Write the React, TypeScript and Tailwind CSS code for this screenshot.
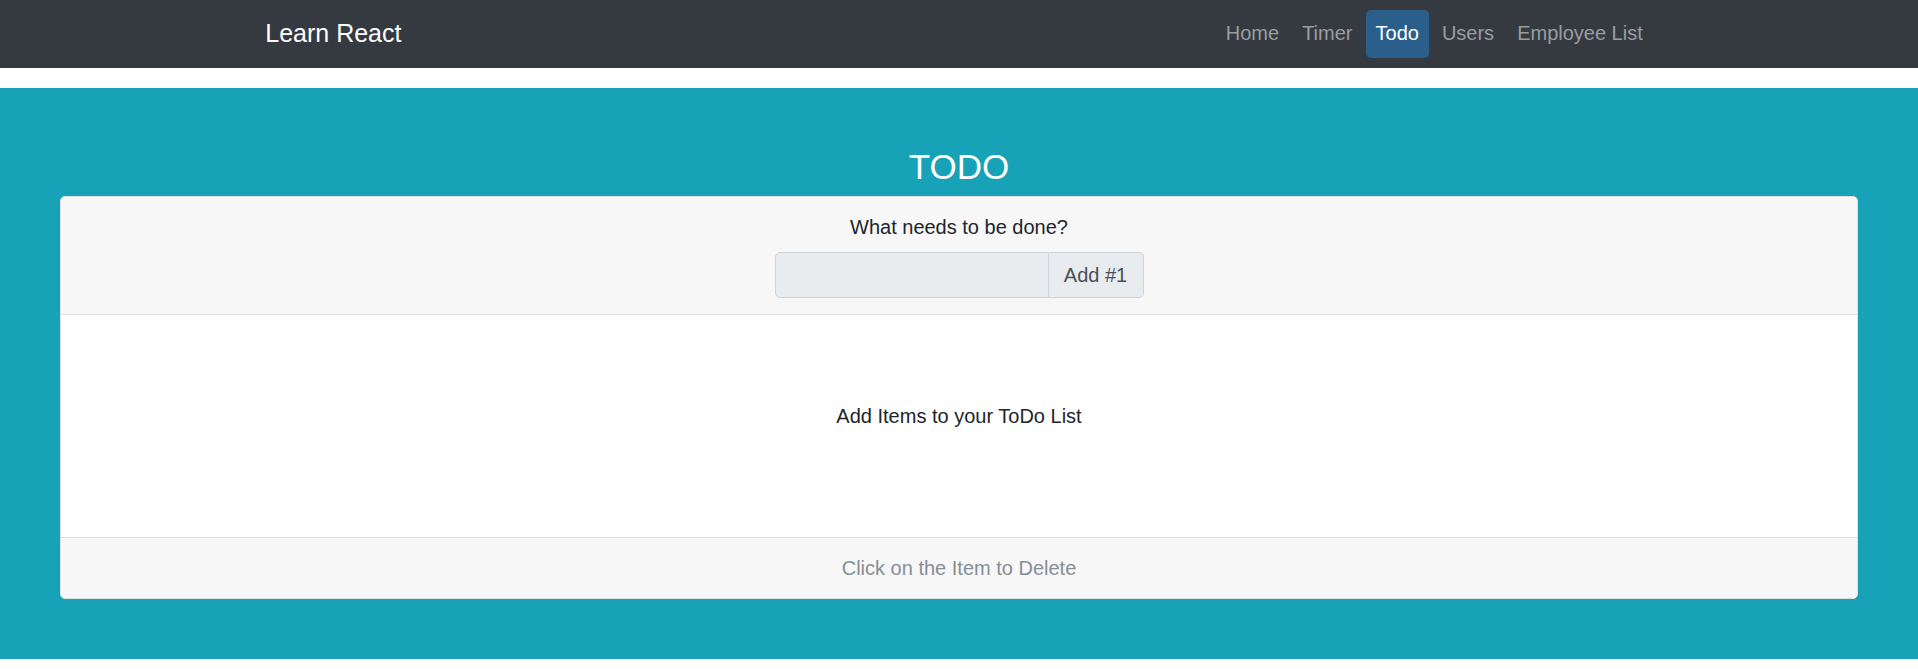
import { useState } from "react";

const LINKS = ["Home", "Timer", "Todo", "Users", "Employee List"];

function NavBar({ active }: { active: string }) {
  return (
    <nav className="h-[68px] bg-[#343a40]">
      <div className="mx-auto flex h-full w-[1425px] items-center px-[18.75px]">
        <a href="#" className="mb-[2px] text-[25px] leading-[38px] text-white">Learn React</a>
        <ul className="ml-auto flex items-center gap-[3px]">
          {LINKS.map((link) => (
            <li key={link}>
              <a
                href="#"
                className={
                  link === active
                    ? "block h-[47.5px] rounded-[5px] bg-[#2a5f8c] px-[10px] text-[20px] leading-[47.5px] text-white"
                    : "block h-[47.5px] px-[10px] text-[20px] leading-[47.5px] text-[#9a9da0]"
                }
              >
                {link}
              </a>
            </li>
          ))}
        </ul>
      </div>
    </nav>
  );
}

function TodoCard() {
  const [text, setText] = useState("");
  const [items, setItems] = useState<string[]>([]);

  const add = () => {
    if (!text.trim()) return;
    setItems([...items, text.trim()]);
    setText("");
  };

  return (
    <div className="overflow-hidden rounded-[5px] border border-[#dfdfdf] bg-white">
      <div className="flex flex-col items-center border-b border-[#dfdfdf] bg-[#f7f7f7] px-[25px] pt-[15px] pb-[16px]">
        <label className="mb-[10px] text-[20px] leading-[30px] text-[#212529]">What needs to be done?</label>
        <div className="flex h-[46px] w-[369px]">
          <input
            value={text}
            onChange={(e) => setText(e.target.value)}
            onKeyDown={(e) => e.key === "Enter" && add()}
            className="h-full w-[274px] rounded-l-[5px] border border-[#ced4da] bg-[#e9ecef] px-[15px] text-[20px] text-[#495057] outline-none"
          />
          <button
            onClick={add}
            className="h-full flex-1 rounded-r-[5px] border border-l-0 border-[#ced4da] bg-[#e9ecef] text-[20px] text-[#495057]"
          >
            Add #{items.length + 1}
          </button>
        </div>
      </div>
      <div className="h-[222px] pt-[86px] text-center text-[20px] leading-[30px] text-[#212529]">
        {items.length ? (
          items.map((item, index) => (
            <div key={index} className="cursor-pointer" onClick={() => setItems(items.filter((_, i) => i !== index))}>
              {item}
            </div>
          ))
        ) : (
          <p>Add Items to your ToDo List</p>
        )}
      </div>
      <div className="border-t border-[#dfdfdf] bg-[#f7f7f7] py-[15px] text-center text-[20px] leading-[30px] text-[#868e96]">
        Click on the Item to Delete
      </div>
    </div>
  );
}

export default function App() {
  return (
    <div className="h-[669px] bg-white font-['Liberation_Sans',Arial,sans-serif]">
      <NavBar active="Todo" />
      <section className="mt-[20px] bg-[#17a2b8] px-[60px] pt-[58px] pb-[60px]">
        <h3 className="mb-[8px] text-center text-[35px] leading-[42px] text-white">TODO</h3>
        <TodoCard />
      </section>
    </div>
  );
}
